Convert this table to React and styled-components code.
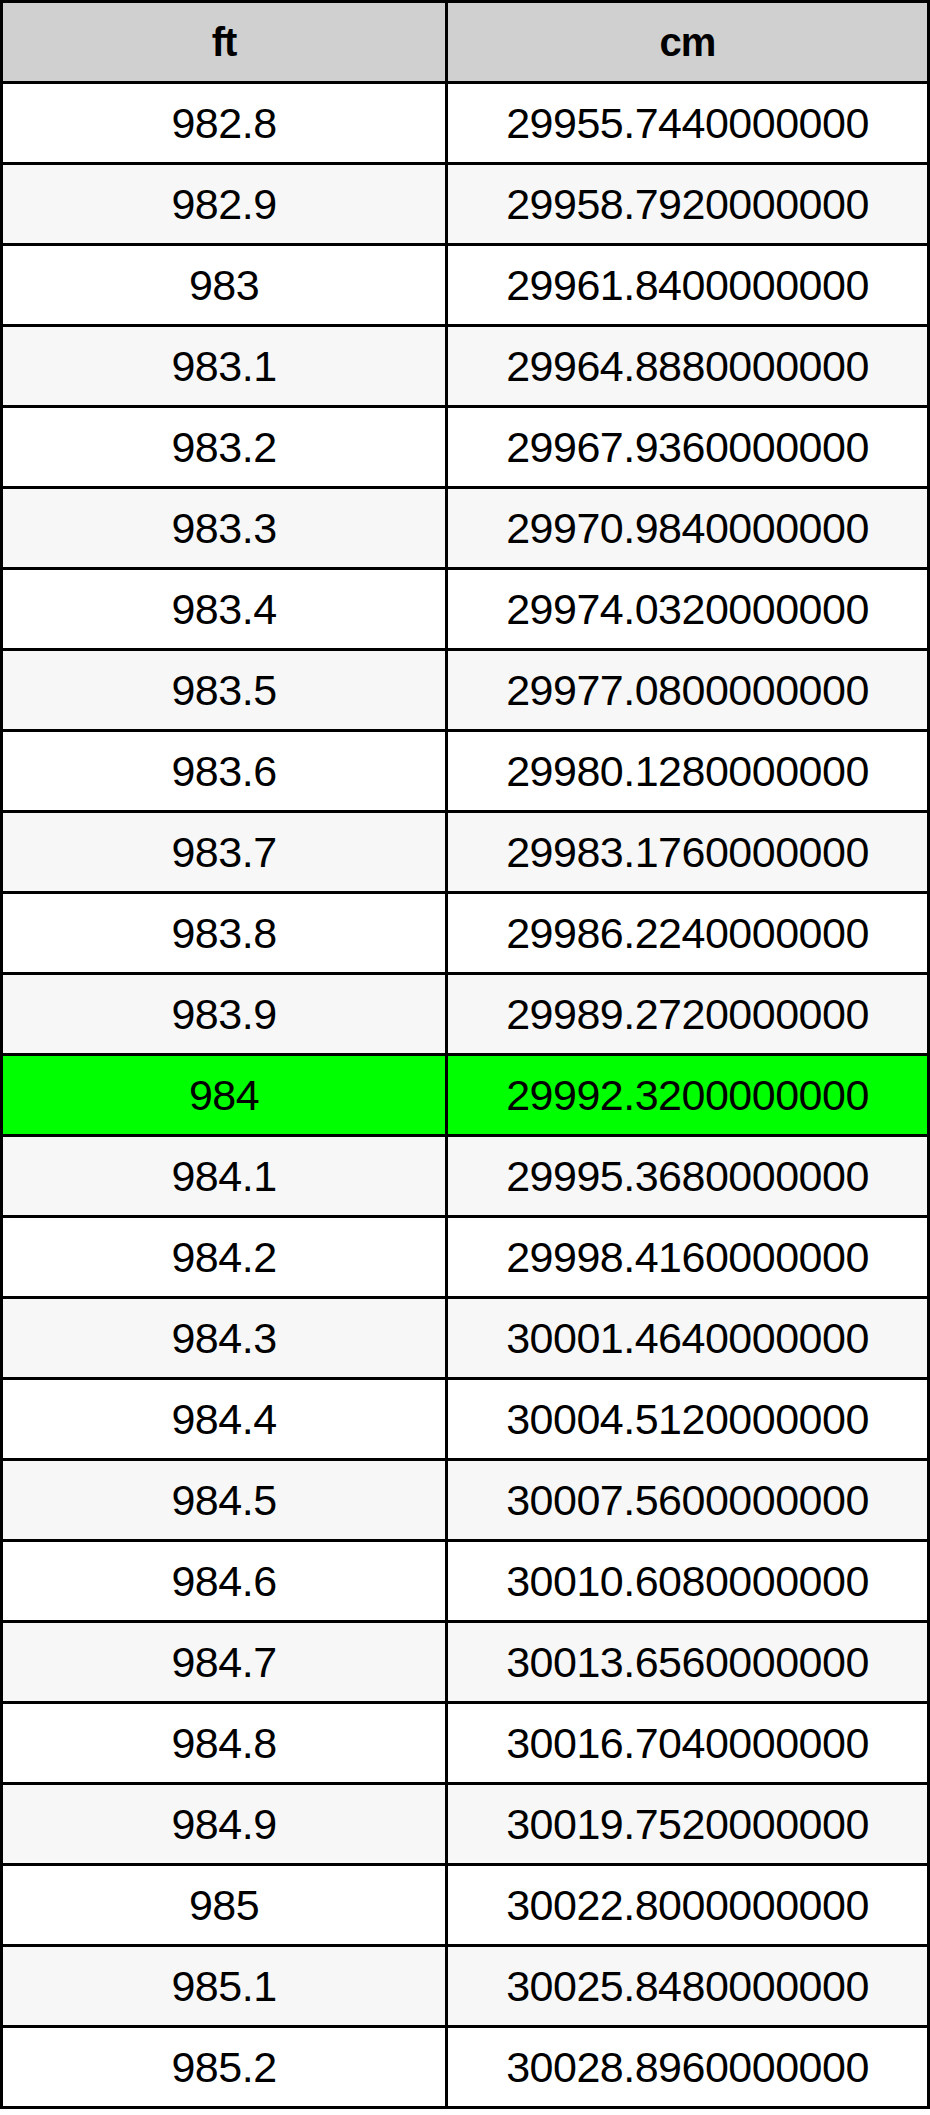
import { Fragment } from "react";
import styled, { createGlobalStyle } from "styled-components";

const GlobalStyle = createGlobalStyle`
  body {
    margin: 0;
    background: #ffffff;
    font-family: "Liberation Sans", Arial, sans-serif;
  }
`;

const Table = styled.div`
  display: grid;
  grid-template-columns: 442px 479px;
  grid-auto-rows: 78px;
  gap: 3px;
  width: 930px;
  padding: 3px;
  box-sizing: border-box;
  background-color: #000;
`;

const HeadCell = styled.div`
  display: flex;
  align-items: center;
  justify-content: center;
  background-color: #d0d0d0;
  font-size: 40px;
  font-weight: bold;
  letter-spacing: -1px;
  color: #000;
`;

const Cell = styled.div`
  display: flex;
  align-items: center;
  justify-content: center;
  background-color: ${(p) =>
    p.$active ? "#00ff00" : p.$shaded ? "#f7f7f7" : "#ffffff"};
  font-size: 43px;
  letter-spacing: -0.5px;
  color: #000;
`;

const rows = [
  ["982.8", "29955.7440000000"],
  ["982.9", "29958.7920000000"],
  ["983", "29961.8400000000"],
  ["983.1", "29964.8880000000"],
  ["983.2", "29967.9360000000"],
  ["983.3", "29970.9840000000"],
  ["983.4", "29974.0320000000"],
  ["983.5", "29977.0800000000"],
  ["983.6", "29980.1280000000"],
  ["983.7", "29983.1760000000"],
  ["983.8", "29986.2240000000"],
  ["983.9", "29989.2720000000"],
  ["984", "29992.3200000000"],
  ["984.1", "29995.3680000000"],
  ["984.2", "29998.4160000000"],
  ["984.3", "30001.4640000000"],
  ["984.4", "30004.5120000000"],
  ["984.5", "30007.5600000000"],
  ["984.6", "30010.6080000000"],
  ["984.7", "30013.6560000000"],
  ["984.8", "30016.7040000000"],
  ["984.9", "30019.7520000000"],
  ["985", "30022.8000000000"],
  ["985.1", "30025.8480000000"],
  ["985.2", "30028.8960000000"],
];

export default function App() {
  return (
    <>
      <GlobalStyle />
      <Table>
        <HeadCell>ft</HeadCell>
        <HeadCell>cm</HeadCell>
        {rows.map(([ft, cm], i) => (
          <Fragment key={ft}>
            <Cell $shaded={i % 2 === 1} $active={ft === "984"}>
              {ft}
            </Cell>
            <Cell $shaded={i % 2 === 1} $active={ft === "984"}>
              {cm}
            </Cell>
          </Fragment>
        ))}
      </Table>
    </>
  );
}
